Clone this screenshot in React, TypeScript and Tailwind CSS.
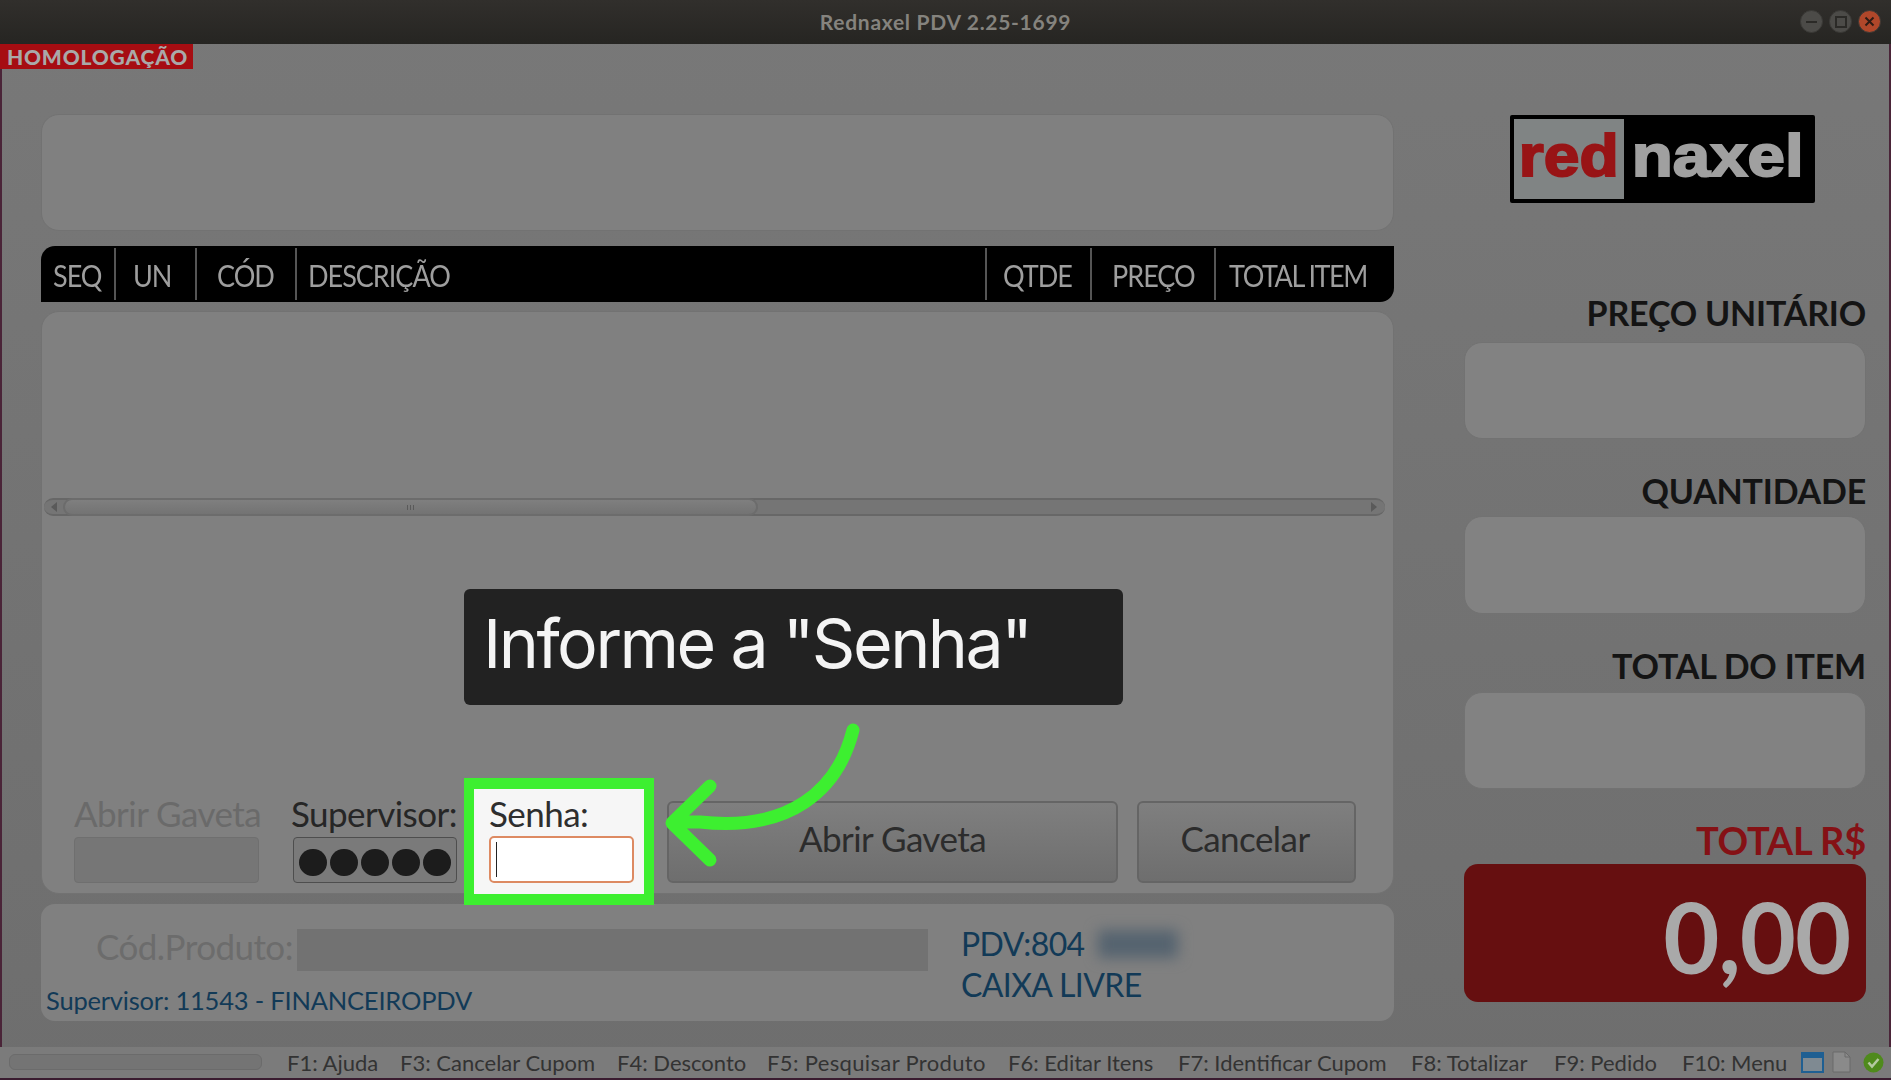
import React from "react";

const headerCols = [
  { label: "SEQ", cls: "w-[75px] pl-[12px]" },
  { label: "UN", cls: "w-[81px] pl-[17px]" },
  { label: "CÓD", cls: "w-[100px] pl-[20px]" },
  { label: "DESCRIÇÃO", cls: "w-[690px] pl-[11px]" },
  { label: "QTDE", cls: "w-[105px] pl-[16px]" },
  { label: "PREÇO", cls: "w-[124px] pl-[20px]" },
  { label: "TOTAL ITEM", cls: "flex-1 pl-[13px] tracking-[-1.6px]" },
];

const shortcuts = [
  { label: "F1: Ajuda", cls: "w-[113px]" },
  { label: "F3: Cancelar Cupom", cls: "w-[217px]" },
  { label: "F4: Desconto", cls: "w-[150px]" },
  { label: "F5: Pesquisar Produto", cls: "w-[241px] tracking-[0.35px]" },
  { label: "F6: Editar Itens", cls: "w-[170px]" },
  { label: "F7: Identificar Cupom", cls: "w-[233px]" },
  { label: "F8: Totalizar", cls: "w-[143px]" },
  { label: "F9: Pedido", cls: "w-[128px]" },
  { label: "F10: Menu", cls: "w-[119px]" },
];

const WindowButton = ({ color, children }: { color: string; children: React.ReactNode }) => (
  <div className={`flex h-[23px] w-[23px] items-center justify-center rounded-full border border-[#3a3936] ${color}`}>
    {children}
  </div>
);

const ValueBox = () => (
  <div className="h-full w-full rounded-[18px] border border-[#727272] bg-[#828282]" />
);

const App = () => {
  return (
    <div className="relative flex h-[1080px] w-[1891px] flex-col overflow-hidden bg-gradient-to-b from-[#787878] to-[#6e6e6e] font-['Lato','Open_Sans',sans-serif]">
      {/* title bar */}
      <div className="relative flex h-[44px] shrink-0 items-center justify-center bg-gradient-to-b from-[#312f2c] to-[#262522]">
        <span className="text-[21px] font-bold tracking-[0.7px] text-[#85837e]">Rednaxel PDV 2.25-1699</span>
        <div className="absolute right-[10px] top-[10px] flex gap-[6px]">
          <WindowButton color="bg-[#4c4b48]">
            <div className="h-[2px] w-[11px] bg-[#2b2a27]" />
          </WindowButton>
          <WindowButton color="bg-[#4c4b48]">
            <div className="h-[12px] w-[12px] border-2 border-[#2b2a27]" />
          </WindowButton>
          <WindowButton color="bg-[#b0472a]">
            <svg width="11" height="11" viewBox="0 0 11 11">
              <path d="M1.5 1.5 9.5 9.5M9.5 1.5 1.5 9.5" stroke="#2e1b14" strokeWidth="2" />
            </svg>
          </WindowButton>
        </div>
      </div>

      <div className="absolute left-0 top-[44px] flex h-[25px] w-[193px] items-center bg-[#a60d12] pl-[7px] text-[21px] font-black tracking-[0.8px] text-[#a9a9a9]">
        HOMOLOGAÇÃO
      </div>

      {/* body */}
      <div className="flex flex-1 border-x-2 border-x-[#4a2438] pl-[39px]">
        <div className="flex w-[1353px] flex-col pt-[70px]">
          <div className="h-[117px] rounded-[18px] border border-[#727272] bg-[#808080]" />

          <div className="mt-[15px] flex h-[56px] rounded-tl-[14px] rounded-br-[14px] bg-black text-[30px] tracking-[-1.1px] text-[#9e9e9e]">
            {headerCols.map((col, i) => (
              <div key={col.label} className={`flex items-center pt-[3px] ${col.cls} ${i < 6 ? "my-[2px] border-r-2 border-r-[#555555]" : ""}`}>
                <span className="inline-block origin-left scale-x-[0.9] whitespace-nowrap">{col.label}</span>
              </div>
            ))}
          </div>

          {/* item list */}
          <div className="mt-[9px] flex h-[583px] flex-col rounded-[18px] border border-[#727272] bg-[#808080] text-[35px] leading-[38px] tracking-[-0.55px]">
            <div className="ml-[2px] mr-[8px] mt-[186px] flex h-[18px] items-center rounded-full border-y-2 border-[#676767] bg-[#757575] pr-[1px]">
              <div className="flex w-[19px] justify-center">
                <div className="h-0 w-0 border-y-[5px] border-r-[6px] border-y-transparent border-r-[#5a5a5a]" />
              </div>
              <div className="flex h-[18px] w-[695px] items-center justify-center gap-[2px] rounded-full border-2 border-[#6c6c6c] bg-gradient-to-b from-[#7f7f7f] to-[#737373]">
                <div className="h-[5px] w-px bg-[#5a5a5a]" />
                <div className="h-[5px] w-px bg-[#5a5a5a]" />
                <div className="h-[5px] w-px bg-[#5a5a5a]" />
              </div>
              <div className="flex-1" />
              <div className="flex w-[20px] justify-center">
                <div className="h-0 w-0 border-y-[5px] border-l-[6px] border-y-transparent border-l-[#5a5a5a]" />
              </div>
            </div>

            <div className="mt-auto flex items-end pb-[10px] pl-[32px]">
              <div className="w-[185px]">
                <div className="whitespace-nowrap text-[#6a6a6a]">Abrir Gaveta</div>
                <div className="mt-[5px] h-[46px] rounded-[4px] border border-[#6f6f6f] bg-[#767676]" />
              </div>
              <div className="ml-[34px] w-[164px]">
                <div className="-ml-[2px] whitespace-nowrap text-[#262626]">Supervisor:</div>
                <div className="mt-[5px] flex h-[46px] items-center justify-center gap-[3px] rounded-[4px] border border-[#4e4e4e] bg-[#7a7a7a] pt-[4px]">
                  {[0, 1, 2, 3, 4].map((dot) => (
                    <div key={dot} className="h-[27px] w-[28px] rounded-full bg-[#1c1c1c]" />
                  ))}
                </div>
              </div>
              <div className="ml-[210px] flex h-[82px] w-[451px] items-center justify-center rounded-[6px] border-2 border-[#656565] bg-gradient-to-b from-[#7f7f7f] to-[#6e6e6e] pb-[8px] text-[#2c2c2c]">
                Abrir Gaveta
              </div>
              <div className="ml-[19px] flex h-[82px] w-[219px] items-center justify-center rounded-[6px] border-2 border-[#656565] bg-gradient-to-b from-[#7f7f7f] to-[#6e6e6e] pb-[8px] pr-[3px] text-[#2c2c2c]">
                Cancelar
              </div>
            </div>
          </div>

          {/* product bar */}
          <div className="mt-[10px] flex h-[117px] rounded-[14px] bg-[#808080]">
            <div className="flex w-[920px] flex-col">
              <div className="mt-[25px] flex h-[42px] items-center">
                <span className="ml-[55px] w-[201px] whitespace-nowrap pb-[8px] text-[35px] tracking-[-0.55px] text-[#6c6c6c]">Cód.Produto:</span>
                <div className="h-full w-[631px] bg-[#727272]" />
              </div>
              <div className="ml-[5px] mt-[10px] whitespace-nowrap text-[25.5px] tracking-[-0.2px] text-[#123a57]">
                Supervisor: 11543 - FINANCEIROPDV
              </div>
            </div>
            <div className="text-[32px] tracking-[-0.6px] text-[#123a57]">
              <div className="mt-[21px] flex h-[38px] items-center">
                PDV:804
                <div className="ml-[13px] h-[28px] w-[80px] bg-[#55636f] blur-[7px]" />
              </div>
              <div className="mt-[3px] leading-[38px]">CAIXA LIVRE</div>
            </div>
          </div>
        </div>

        {/* totals column */}
        <div className="ml-[70px] flex w-[402px] flex-col pt-[71px]">
          <div className="ml-[46px] flex h-[88px] w-[305px] rounded-[2px] bg-black p-[4px] font-['Liberation_Sans',sans-serif] text-[60px] font-bold [-webkit-text-stroke:2px]">
            <div className="flex h-[80px] w-[110px] items-center justify-center bg-[#808484] pb-[6px] text-[#981416]">
              <span className="inline-block scale-x-[1.07]">red</span>
            </div>
            <div className="flex h-[80px] flex-1 items-center justify-center pb-[6px] text-[#a0a0a0]">
              <span className="inline-block scale-x-[1.12]">naxel</span>
            </div>
          </div>

          <div className="mt-[90px] h-[40px] text-right text-[34px] font-bold leading-[40px] tracking-[-0.2px] text-[#141414]">PREÇO UNITÁRIO</div>
          <div className="mt-[9px] h-[97px]"><ValueBox /></div>

          <div className="mt-[32px] h-[40px] text-right text-[34px] font-bold leading-[40px] tracking-[-0.2px] text-[#141414]">QUANTIDADE</div>
          <div className="mt-[5px] h-[98px]"><ValueBox /></div>

          <div className="mt-[32px] h-[40px] text-right text-[34px] font-bold leading-[40px] tracking-[-0.2px] text-[#141414]">TOTAL DO ITEM</div>
          <div className="mt-[6px] h-[97px]"><ValueBox /></div>

          <div className="mt-[31px] h-[40px] text-right text-[38px] font-bold leading-[40px] tracking-[-0.3px] text-[#851115]">TOTAL R$</div>
          <div className="mt-[4px] flex h-[138px] items-center justify-end rounded-[14px] bg-[#660f10] pr-[16px] pt-[8px] text-[97px] font-bold tracking-[-1.2px] text-[#a9a9a9]">
            0,00
          </div>
        </div>
      </div>

      {/* status bar */}
      <div className="flex h-[31px] shrink-0 items-center bg-[#7b7b7b] pb-[1px] pl-[9px] text-[22px] text-[#333333]">
        <div className="mr-[25px] h-[16px] w-[253px] rounded-[6px] border border-[#6b6b6b] bg-[#747474]" />
        {shortcuts.map((s) => (
          <div key={s.label} className={`whitespace-nowrap ${s.cls}`}>
            {s.label}
          </div>
        ))}
        <svg width="23" height="21" viewBox="0 0 23 21">
          <rect x="1" y="1" width="21" height="19" fill="#7f8a92" stroke="#1f5f92" strokeWidth="2" />
          <rect x="1" y="1" width="21" height="5" fill="#1f5f92" />
        </svg>
        <svg className="ml-[8px]" width="19" height="22" viewBox="0 0 19 22">
          <path d="M1 1H13L18 6V21H1Z" fill="#8a8a8a" stroke="#6a6a6a" />
          <path d="M13 1V6H18" fill="none" stroke="#6a6a6a" />
        </svg>
        <svg className="ml-[12px]" width="21" height="21" viewBox="0 0 21 21">
          <circle cx="10.5" cy="10.5" r="10" fill="#4f8a1c" />
          <path d="M5.5 10.5 9 14.5 15.5 7" fill="none" stroke="#b5c9a0" strokeWidth="2.5" />
        </svg>
      </div>
      <div className="h-[2px] shrink-0 bg-[#3a1c30]" />

      {/* tutorial overlay */}
      <div className="absolute left-[464px] top-[589px] flex h-[116px] w-[659px] items-center rounded-[6px] bg-[#222222] pb-[8px] pl-[19px] font-['Inter',sans-serif] text-[68px] tracking-[-2.5px] text-[#f4f4f4]">
        Informe a "Senha"
      </div>
      <div className="absolute left-[464px] top-[778px] h-[127px] w-[190px] border-x-[10px] border-y-[11px] border-[#3def30] bg-[#f6f6f6] pl-[15px] pt-[5px]">
        <div className="text-[35px] leading-[38px] tracking-[-0.55px] text-[#2e2e2e]">Senha:</div>
        <div className="mt-[4px] flex h-[47px] w-[145px] items-center rounded-[5px] border-2 border-[#dd8a62] bg-white pl-[5px]">
          <div className="h-[35px] w-px bg-[#222222]" />
        </div>
      </div>
      <svg className="absolute left-[660px] top-[720px]" width="200" height="150" viewBox="660 720 200 150" fill="none">
        <path
          d="M853 730C838 790 790 832 700 822L674 822M710 786 672 823 710 860"
          stroke="#3def30"
          strokeWidth="13"
          strokeLinecap="round"
          strokeLinejoin="round"
        />
      </svg>
    </div>
  );
};

export default App;
